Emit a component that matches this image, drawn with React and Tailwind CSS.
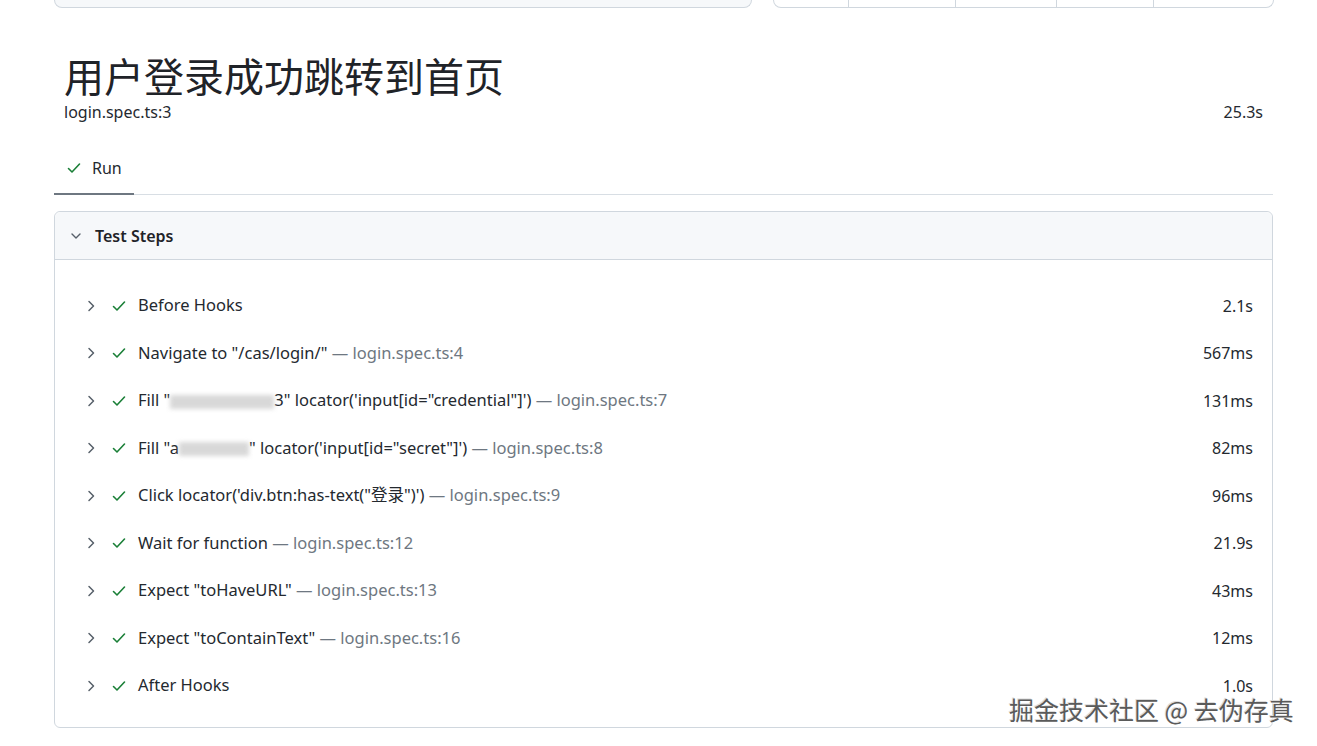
import React from "react";

const font = { fontFamily: '"Noto Sans", "Noto Sans CJK SC", sans-serif' };

function Check({ className = "" }) {
  return (
    <svg viewBox="0 0 16 16" width="16" height="16" className={className}>
      <path d="M2.5 8.5l3.5 3.5 7.5-8" fill="none" stroke="#1a7f37" strokeWidth="1.6" strokeLinecap="round" strokeLinejoin="round" />
    </svg>
  );
}

function ChevronRight() {
  return (
    <svg viewBox="0 0 16 16" width="16" height="16">
      <path d="M6 3.5l4.5 4.5L6 12.5" fill="none" stroke="#57606a" strokeWidth="1.5" strokeLinecap="round" strokeLinejoin="round" />
    </svg>
  );
}

function ChevronDown() {
  return (
    <svg viewBox="0 0 16 16" width="16" height="16">
      <path d="M4 6l4 4 4-4" fill="none" stroke="#57606a" strokeWidth="1.4" strokeLinecap="round" strokeLinejoin="round" />
    </svg>
  );
}

function Blur({ w }) {
  return <span className="inline-block h-[14px] align-middle bg-[#cfcfcf] blur-[2px] opacity-80" style={{ width: w }} />;
}

const loc = " — ";

const steps = [
  { title: <>Before Hooks</>, time: "2.1s" },
  { title: <>Navigate to "/cas/login/"<span className="text-[#6e7781]">{loc}login.spec.ts:4</span></>, time: "567ms" },
  {
    title: (
      <>
        Fill "<Blur w={104} />3" locator('input[id="credential"]')<span className="text-[#6e7781]">{loc}login.spec.ts:7</span>
      </>
    ),
    time: "131ms",
  },
  {
    title: (
      <>
        Fill "a<Blur w={70} />" locator('input[id="secret"]')<span className="text-[#6e7781]">{loc}login.spec.ts:8</span>
      </>
    ),
    time: "82ms",
  },
  { title: <>Click locator('div.btn:has-text("登录")')<span className="text-[#6e7781]">{loc}login.spec.ts:9</span></>, time: "96ms" },
  { title: <>Wait for function<span className="text-[#6e7781]">{loc}login.spec.ts:12</span></>, time: "21.9s" },
  { title: <>Expect "toHaveURL"<span className="text-[#6e7781]">{loc}login.spec.ts:13</span></>, time: "43ms" },
  { title: <>Expect "toContainText"<span className="text-[#6e7781]">{loc}login.spec.ts:16</span></>, time: "12ms" },
  { title: <>After Hooks</>, time: "1.0s" },
];

export default function App() {
  return (
    <div className="relative w-[1317px] h-[746px] overflow-hidden bg-white text-[#24292f]" style={font}>
      {/* top cut-off bars */}
      <div className="flex ml-[54px] gap-[21px]">
        <div className="w-[698px] h-[8px] border border-t-0 border-[#d0d7de] rounded-b-[8px] bg-[#f6f8fa]" />
        <div className="w-[501px] h-[8px] border border-t-0 border-[#d0d7de] rounded-b-[8px] flex">
          <div className="w-[75px] border-r border-[#d0d7de]" />
          <div className="w-[107px] border-r border-[#d0d7de]" />
          <div className="w-[101px] border-r border-[#d0d7de]" />
          <div className="w-[97px] border-r border-[#d0d7de]" />
        </div>
      </div>

      <div className="ml-[54px] w-[1219px]">
        <div className="px-[10px] pt-[46px]">
          <h1 className="text-[40px] leading-[42px] font-normal text-[#1f2328]" style={{ fontFamily: '"Noto Sans CJK SC", sans-serif' }}>
            用户登录成功跳转到首页
          </h1>
          <div className="flex justify-between text-[16px] leading-[24px] mt-[4px]">
            <span>login.spec.ts:3</span>
            <span>25.3s</span>
          </div>
        </div>

        <div className="mt-[24px] border-b border-[#d8dee4] flex">
          <div className="flex items-center gap-[10px] px-[12px] h-[47px] pb-[6px] border-b-2 border-[#6e7781] -mb-px text-[16px]">
            <Check />
            <span>Run</span>
          </div>
        </div>

        <div className="mt-[16px] border border-[#d0d7de] rounded-[6px] h-[517px]">
          <div className="flex items-center gap-[11px] h-[48px] px-[13px] bg-[#f6f8fa] border-b border-[#d0d7de] rounded-t-[6px]">
            <ChevronDown />
            <span className="text-[16px] font-semibold text-[#1f2328]">Test Steps</span>
          </div>
          <div className="pt-[22px] pl-[28px] pr-[19px]">
            {steps.map((s, i) => (
              <div key={i} className="flex items-center h-[47.5px]">
                <ChevronRight />
                <Check className="ml-[12px]" />
                <span className="ml-[11px] whitespace-nowrap text-[16.5px]">{s.title}</span>
                <span className="ml-auto text-[16px]">{s.time}</span>
              </div>
            ))}
          </div>
        </div>
      </div>

      <div
        className="absolute left-[1009px] top-[693px] text-[25px] leading-[32px] text-[#5a5a5a]"
        style={{ fontFamily: '"Noto Sans CJK SC", sans-serif', textShadow: "1px 1px 0 #fff, -1px -1px 0 #ddd" }}
      >
        掘金技术社区 @ 去伪存真
      </div>
    </div>
  );
}
